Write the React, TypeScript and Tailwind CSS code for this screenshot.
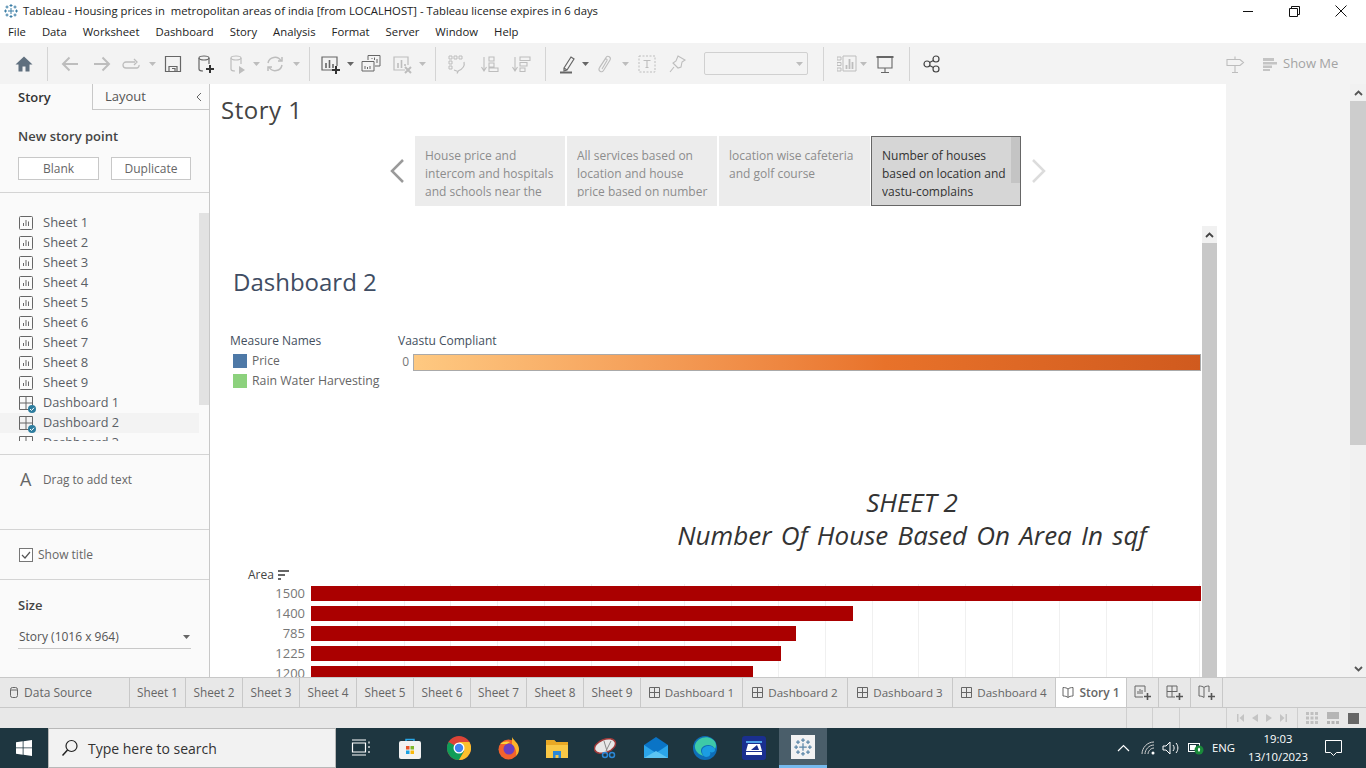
import React from "react";

const menus = ["File", "Data", "Worksheet", "Dashboard", "Story", "Analysis", "Format", "Server", "Window", "Help"];
const sheets = ["Sheet 1", "Sheet 2", "Sheet 3", "Sheet 4", "Sheet 5", "Sheet 6", "Sheet 7", "Sheet 8", "Sheet 9"];

const storyCards = [
    { text: "House price and intercom and hospitals and schools near the houses", width: "w-[150px]" },
    { text: "All services based on location and house price based on number of rooms", width: "w-[150px]" },
    { text: "location wise cafeteria and golf course", width: "w-[151px]" },
];

const sheetTabs = [
    { label: "Sheet 1", width: "w-[56px]" },
    { label: "Sheet 2", width: "w-[57px]" },
    { label: "Sheet 3", width: "w-[57px]" },
    { label: "Sheet 4", width: "w-[57px]" },
    { label: "Sheet 5", width: "w-[57px]" },
    { label: "Sheet 6", width: "w-[57px]" },
    { label: "Sheet 7", width: "w-[56px]" },
    { label: "Sheet 8", width: "w-[57px]" },
    { label: "Sheet 9", width: "w-[57px]" },
];

const dashTabs = [
    { label: "Dashboard 1", width: "w-[102px]" },
    { label: "Dashboard 2", width: "w-[105px]" },
    { label: "Dashboard 3", width: "w-[105px]" },
    { label: "Dashboard 4", width: "w-[103px]" },
];

const bars = [
    { label: "1500", width: "w-[890px]" },
    { label: "1400", width: "w-[542px]" },
    { label: "785", width: "w-[485px]" },
    { label: "1225", width: "w-[470px]" },
    { label: "1200", width: "w-[442px]" },
];

function Tableau({ size, light }: { size: number; light?: boolean }) {
    const c = light ? "#5b87a8" : "#3d7fa6";
    const cross = (x: number, y: number, r: number, k: string) => (
        <path key={k} d={`M${x - r} ${y}h${r * 2}M${x} ${y - r}v${r * 2}`} stroke={c} strokeWidth="1" fill="none" />
    );
    return (
        <svg width={size} height={size} viewBox="0 0 16 16" className="shrink-0">
            {cross(8, 8, 3, "c")}
            {cross(8, 2.5, 1.5, "t")}
            {cross(8, 13.5, 1.5, "b")}
            {cross(2.5, 8, 1.5, "l")}
            {cross(13.5, 8, 1.5, "r")}
            {cross(4, 4, 1.5, "a")}
            {cross(12, 4, 1.5, "d")}
            {cross(4, 12, 1.5, "e")}
            {cross(12, 12, 1.5, "f")}
        </svg>
    );
}

function Caret({ className, dark }: { className: string; dark?: boolean }) {
    return (
        <svg width="7" height="4" viewBox="0 0 7 4" className={`shrink-0 ${className}`}>
            <path d="M0 0h7L3.5 4z" fill={dark ? "#666" : "#bdbdbd"} />
        </svg>
    );
}

function Sep({ className }: { className: string }) {
    return <div className={`w-px h-[34px] bg-[#d4d4d4] shrink-0 ${className}`} />;
}

function Ico({ className, children }: { className: string; children: React.ReactNode }) {
    return (
        <svg width="20" height="20" viewBox="0 0 20 20" fill="none" className={`shrink-0 ${className}`}>
            {children}
        </svg>
    );
}

function Toolbar() {
    const off = "#bdbdbd";
    const on = "#666";
    return (
        <div className="h-[41px] bg-[#f3f3f3] flex items-center shrink-0">
            <Ico className="ml-[14px]"><path d="M10 2.5 1.5 10.5H4.5V17.5H8.5V12.5H11.5V17.5H15.5V10.5H18.5z" fill="#5f6f7e" /></Ico>
            <Sep className="ml-[13px]" />
            <Ico className="ml-[12px]"><path d="M18 10H3M9.5 3.5 3 10l6.5 6.5" stroke={off} strokeWidth="2" /></Ico>
            <Ico className="ml-[12px]"><path d="M2 10h15M10.5 3.5 17 10l-6.5 6.5" stroke={off} strokeWidth="2" /></Ico>
            <Ico className="ml-[9px]"><path d="M14 8H5a2.5 2.5 0 0 0 0 6h11a2.5 2.5 0 0 0 2-3M13 5l3 3-3 3" stroke={off} strokeWidth="1.3" /></Ico>
            <Caret className="ml-[8px]" />
            <Ico className="ml-[7px]"><path d="M2.5 2.5h15v15h-15zM6 17.5v-5h8v5M9 14.5h3v3" stroke={on} strokeWidth="1.2" /></Ico>
            <Ico className="ml-[12px]">
                <ellipse cx="9" cy="4" rx="5" ry="2" stroke={on} strokeWidth="1.2" />
                <path d="M4 4v11c0 1.3 2 2 4 2M14 4v6" stroke={on} strokeWidth="1.2" />
                <path d="M15 11v8M11 15h8" stroke="#333" strokeWidth="2" />
            </Ico>
            <Ico className="ml-[12px]">
                <ellipse cx="9" cy="4" rx="5" ry="2" stroke={off} strokeWidth="1.2" />
                <path d="M4 4v11c0 1.3 2 2 4 2M14 4v6" stroke={off} strokeWidth="1.2" />
                <path d="M12 12l6 4-6 4z" fill={off} />
            </Ico>
            <Caret className="ml-[6px]" />
            <Ico className="ml-[5px]"><path d="M3 9a7 7 0 0 1 13-2M17 11a7 7 0 0 1-13 2M13 7h4V3M7 13H3v4" stroke={off} strokeWidth="1.5" /></Ico>
            <Caret className="ml-[8px]" />
            <Sep className="ml-[9px]" />
            <Ico className="ml-[10px]">
                <path d="M14 16H2V3h15v9" stroke={on} strokeWidth="1.2" />
                <path d="M6 9v5M9.5 6v8M13 10v4" stroke={on} strokeWidth="1.6" />
                <path d="M16 12v8M12 16h8" stroke="#333" strokeWidth="2" />
            </Ico>
            <Caret className="ml-[7px]" dark />
            <Ico className="ml-[7px]">
                <path d="M7 6V1.500h12V12h-5M1 7.500h12V17H1z" stroke={on} strokeWidth="1" />
                <path d="M11 5V4M13.500 6V3.500M16 9V5M4 15v-3M6.500 15v-2M9 15v-3" stroke={on} strokeWidth="1" />
            </Ico>
            <Ico className="ml-[11px]">
                <path d="M13 16H2V3h14v8" stroke={off} strokeWidth="1.2" />
                <path d="M6 9v5M9.5 6v8M13 10v2" stroke={off} strokeWidth="1.6" />
                <path d="M13 13l6 6M19 13l-6 6" stroke={off} strokeWidth="2" />
            </Ico>
            <Caret className="ml-[7px]" />
            <Sep className="ml-[9px]" />
            <Ico className="ml-[11px]">
                <path d="M2 2h3v3H2zM7 2h3v3H7zM12 2h3v3h-3zM2 7h3v3H2zM2 12h3v3H2z" stroke={off} />
                <path d="M17 8c1 4-1 7-6 9M7 16l4 1.500-1 2" stroke={off} strokeWidth="1.2" />
            </Ico>
            <Ico className="ml-[13px]"><path d="M4 3v14M1.500 13 4 17l2.500-4M9 3h5v4H9zM9 9h5v4H9zM9 14h9v3.500H9z" stroke={off} strokeWidth="1.1" /></Ico>
            <Ico className="ml-[11px]"><path d="M4 3v14M1.500 13 4 17l2.500-4M9 3h10v3.500H9zM9 8.500h7v3.500H9zM9 14h5v3.500H9z" stroke={off} strokeWidth="1.1" /></Ico>
            <Sep className="ml-[14px]" />
            <Ico className="ml-[12px]">
                <path d="M6 14 13 3l3 2-7 11-3 1zM6 14l3 2" stroke={on} strokeWidth="1.2" />
                <path d="M2 18.500h12" stroke={on} strokeWidth="2" />
            </Ico>
            <Caret className="ml-[4px]" dark />
            <Ico className="ml-[5px]"><path d="M5.500 13.500 12 3.500c1.800-2.500 5.500-.5 4 2.500l-6.500 10.500c-1.500 2.500-5.500.8-4.300-2.300L11 5.500c.8-1.200 2.500-.3 2 1L8 15" stroke={off} strokeWidth="1.1" /></Ico>
            <Caret className="ml-[8px]" />
            <Ico className="ml-[8px]">
                <path d="M2 2h16v16H2z" stroke={off} strokeDasharray="2 1.500" />
                <path d="M6.500 6.500h7M10 6.500v7M8.500 13.500h3" stroke={off} strokeWidth="1.1" />
            </Ico>
            <Ico className="ml-[10px]"><path d="M11 2l7 4-3 2-1 5-3 1-5-5 3-2zM7 13l-4 5" stroke={off} strokeWidth="1.1" /></Ico>
            <div className="ml-[17px] w-[104px] h-[23px] shrink-0 border border-[#d0d0d0] rounded-[2px] flex items-center justify-end pr-[3px]">
                <Caret className="mr-[1px]" />
            </div>
            <Sep className="ml-[15px]" />
            <Ico className="ml-[13px]">
                <path d="M0 3h4v3H0zM0 8.500h4v3H0zM0 14h4v3H0zM6 2h13v15H6z" stroke={off} />
                <path d="M9.500 15v-4M12.500 15V5M15.500 15V8" stroke={off} strokeWidth="1.800" />
            </Ico>
            <Caret className="ml-[3px]" />
            <Ico className="ml-[8px]">
                <path d="M1.500 3h17" stroke={on} strokeWidth="2" />
                <path d="M3 3v11h14V3M10 14v4M6 18.500h8" stroke={on} strokeWidth="1.100" />
            </Ico>
            <Sep className="ml-[14px]" />
            <Ico className="ml-[12px]">
                <circle cx="5" cy="10" r="3" stroke="#444" strokeWidth="1.200" />
                <circle cx="14" cy="5" r="3" stroke="#444" strokeWidth="1.200" />
                <circle cx="14" cy="15" r="3" stroke="#444" strokeWidth="1.200" />
                <path d="M7.500 8.500 11.500 6.500M7.500 11.500l4 2" stroke="#444" strokeWidth="1.200" />
            </Ico>
            <Ico className="ml-auto">
                <path d="M2 5.500h13l3.500 3-3.500 3H2zM10 2.500v3M10 11.500v7M7 18.500h6" stroke={off} strokeWidth="1.100" />
            </Ico>
            <Ico className="ml-[15px]"><path d="M3 4h11v3H3zM3 8h14v2.500H3zM3 11.500h9v2.500H3zM3 15h7v2H3z" fill="#c4c4c4" /></Ico>
            <span className="ml-[3px] mr-[29px] w-[54px] whitespace-nowrap text-[13px] text-[#a3a3a3]">Show Me</span>
        </div>
    );
}

function SheetIcon() {
    return (
        <svg width="14" height="14" viewBox="0 0 14 14" fill="none" className="shrink-0">
            <rect x="0.500" y="0.500" width="13" height="13" rx="1" stroke="#666" />
            <path d="M4.500 10V7M7 10V4M9.500 10V5.500" stroke="#666" />
        </svg>
    );
}

function DashIcon({ badge }: { badge?: boolean }) {
    return (
        <span className="relative shrink-0 w-[14px] h-[14px]">
            <svg width="14" height="14" viewBox="0 0 14 14" fill="none">
                <path d="M.5.5h13v13H.5zM.5 7h13M7 .5v13" stroke="#666" />
            </svg>
            {badge && (
                <svg width="8" height="8" viewBox="0 0 8 8" className="absolute -right-[3px] -bottom-[3px]">
                    <circle cx="4" cy="4" r="4" fill="#2e7d9e" />
                    <path d="M2 4l1.500 1.500L6 2.800" stroke="#fff" fill="none" />
                </svg>
            )}
        </span>
    );
}

function Sidebar() {
    return (
        <aside className="w-[210px] shrink-0 bg-[#fafafa] border-r border-[#c8c8c8] flex flex-col overflow-hidden">
            <div className="flex h-[26px] shrink-0">
                <div className="w-[92px] pl-[18px] pt-[1px] flex items-center text-[13px] font-semibold text-[#333]">Story</div>
                <div className="flex-1 pl-[12px] pr-[7px] pt-[1px] flex items-center justify-between border-l border-b border-[#c8c8c8] text-[13px] text-[#555]">
                    Layout
                    <svg width="7" height="10" viewBox="0 0 7 10" fill="none"><path d="M6 1 2 5l4 4" stroke="#666" /></svg>
                </div>
            </div>
            <div className="h-[83px] shrink-0 border-b border-[#d4d4d4] px-[18px] pt-[17px]">
                <div className="text-[13px] font-semibold text-[#444] leading-[18px]">New story point</div>
                <div className="flex gap-[12px] mt-[12px]">
                    <div className="w-[81px] h-[23px] border border-[#c8c8c8] bg-white flex items-center justify-center text-[12px] text-[#666]">Blank</div>
                    <div className="w-[80px] h-[23px] border border-[#c8c8c8] bg-white flex items-center justify-center text-[12px] text-[#666]">Duplicate</div>
                </div>
            </div>
            <div className="h-[262px] shrink-0 border-b border-[#d4d4d4] pt-[20px]">
                <div className="h-[228px] overflow-hidden flex">
                    <div className="w-[199px] shrink-0">
                        {sheets.map((s) => (
                            <div key={s} className="h-5 pl-[19px] flex items-center gap-[10px] text-[13px] text-[#5a5f66]">
                                <SheetIcon />
                                {s}
                            </div>
                        ))}
                        <div className="h-5 pl-[19px] flex items-center gap-[10px] text-[12.700px] text-[#5a5f66]">
                            <DashIcon badge />
                            Dashboard 1
                        </div>
                        <div className="h-5 pl-[19px] flex items-center gap-[10px] text-[12.700px] text-[#5a5f66] bg-[#f3f3f3]">
                            <DashIcon badge />
                            Dashboard 2
                        </div>
                        <div className="h-5 pl-[19px] flex items-center gap-[10px] text-[12.700px] text-[#5a5f66]">
                            <DashIcon badge />
                            Dashboard 3
                        </div>
                    </div>
                    <div className="w-[10px] h-[192px] bg-[#e2e2e2]" />
                </div>
            </div>
            <div className="h-[75px] shrink-0 border-b border-[#d4d4d4] pl-[20px] pt-[14px] flex items-start">
                <span className="text-[18px] leading-[21px] text-[#666] w-[23px]">A</span>
                <span className="text-[11.800px] leading-[21px] text-[#666]">Drag to add text</span>
            </div>
            <div className="h-[50px] shrink-0 border-b border-[#d4d4d4] pl-[19px] flex items-center gap-[5px]">
                <svg width="14" height="14" viewBox="0 0 14 14" fill="none" className="shrink-0">
                    <rect x=".5" y=".5" width="13" height="13" stroke="#777" fill="#fff" />
                    <path d="M3 7l3 3 5-6" stroke="#555" strokeWidth="1.200" />
                </svg>
                <span className="text-[12px] text-[#666]">Show title</span>
            </div>
            <div className="px-[18px] pt-[16px]">
                <div className="text-[13px] font-semibold text-[#444] leading-[18px]">Size</div>
                <div className="mt-[11px] h-[24px] w-[173px] border-b border-[#c8c8c8] flex items-center justify-between pl-px pr-[1px] text-[12px] text-[#555]">
                    Story (1016 x 964)
                    <Caret className="" dark />
                </div>
            </div>
        </aside>
    );
}

function StoryNav() {
    return (
        <div className="flex mt-[26px] h-[70px] shrink-0">
            <div className="ml-[176px] w-[29px] flex items-center">
                <svg width="18" height="26" viewBox="0 0 18 26" fill="none" className="ml-[3px]"><path d="M14 2 3 13l11 11" stroke="#9a9a9a" strokeWidth="2.500" /></svg>
            </div>
            <div className="flex gap-[2px]">
                {storyCards.map((c) => (
                    <div key={c.text} className={`${c.width} h-[70px] bg-[#ececec] overflow-hidden pl-[10px] pr-[8px] pt-[11px] pb-[9px] text-[12px] leading-[18px] text-[#8c8c8c]`}>
                        <div className="h-[50px] overflow-hidden">{c.text}</div>
                    </div>
                ))}
                <div className="relative -ml-px w-[150px] h-[70px] bg-[#d6d6d6] border border-[#666] overflow-hidden pl-[10px] pr-[10px] pt-[10px] text-[12px] leading-[18px] text-[#333]">
                    <div className="h-[50px] overflow-hidden">Number of houses based on location and vastu-complains</div>
                    <div className="absolute right-0 top-0 w-[9px] h-[46px] bg-[#c4c4c4]" />
                </div>
            </div>
            <div className="ml-[8px] flex items-center">
                <svg width="18" height="26" viewBox="0 0 18 26" fill="none"><path d="M4 2l11 11L4 24" stroke="#dcdcdc" strokeWidth="2.500" /></svg>
            </div>
        </div>
    );
}

function DashView() {
    return (
        <div className="mt-[20px] ml-[12px] flex h-[451px] overflow-hidden">
            <div className="w-[980px] shrink-0 overflow-hidden">
                <div className="pt-[40px] pl-[11px] text-[24px] leading-[32px] text-[#3f4d63]">Dashboard 2</div>
                <div className="mt-[34px] pl-[8px] flex">
                    <div className="w-[168px] shrink-0">
                        <div className="h-[18px] text-[12px] leading-[18px] font-medium text-[#444f5e]">Measure Names</div>
                        <div className="mt-[1px] h-5 flex items-center pl-[3px] gap-[5px] text-[12px] text-[#666]">
                            <span className="w-[14px] h-[14px] bg-[#4e79a7]" />
                            Price
                        </div>
                        <div className="h-5 flex items-center pl-[3px] gap-[5px] text-[12.300px] text-[#666] whitespace-nowrap">
                            <span className="w-[14px] h-[14px] bg-[#8cd17d]" />
                            Rain Water Harvesting
                        </div>
                    </div>
                    <div className="flex-1">
                        <div className="h-[18px] text-[12px] leading-[18px] font-medium text-[#444f5e]">Vaastu Compliant</div>
                        <div className="mt-[3px] flex items-center pr-px">
                            <span className="w-[11px] text-right text-[12px] text-[#777]">0</span>
                            <div className="ml-[4px] flex-1 h-[17px] border border-[#aaa] bg-gradient-to-r from-[#fec981] via-[#e8722a] via-60% to-[#d05a1e]" />
                        </div>
                    </div>
                </div>
                <div className="mt-[95px] ml-[455px] w-[470px] text-center italic text-[26px] leading-[33px] text-[#333] whitespace-nowrap">
                    <div>SHEET 2</div>
                    <div className="[word-spacing:2.500px]">Number Of House Based On Area In sqf</div>
                </div>
                <div className="mt-[15px] ml-[26px] h-[16px] flex items-center gap-[4px] text-[12px] font-medium text-[#444]">
                    Area
                    <svg width="11" height="10" viewBox="0 0 11 10" fill="#666"><path d="M0 0h11v2H0zM0 4h7v2H0zM0 8h3v2H0z" /></svg>
                </div>
                <div className="mt-[1px] flex">
                    <div className="w-[83px] shrink-0">
                        {bars.map((b) => (
                            <div key={b.label} className="h-5 text-right text-[13px] leading-[18px] text-[#777]">{b.label}</div>
                        ))}
                    </div>
                    <div className="ml-[6px] flex-1 bg-[repeating-linear-gradient(90deg,transparent_0,transparent_45.8px,#f0f0f0_45.8px,#f0f0f0_46.8px)]">
                        {bars.map((b) => (
                            <div key={b.label} className="h-5 pt-[2px]">
                                <div className={`${b.width} h-[15px] bg-[#aa0000]`} />
                            </div>
                        ))}
                    </div>
                </div>
            </div>
            <div className="w-[15px] shrink-0 flex flex-col">
                <div className="h-[17px] bg-[#f1f1f1] flex items-center justify-center">
                    <svg width="9" height="6" viewBox="0 0 9 6" fill="none"><path d="M1 5l3.500-3.500L8 5" stroke="#444" strokeWidth="1.800" /></svg>
                </div>
                <div className="flex-1 bg-[#c8c8c8]" />
            </div>
        </div>
    );
}

function Tabs() {
    const tab = "h-full shrink-0 flex items-center justify-center border-r border-[#c8c8c8] text-[#666]";
    const add = "w-[32px] h-full shrink-0 flex items-center justify-center border-r border-[#c8c8c8]";
    const plus = <path d="M13.500 8v7M10 11.500h7" stroke="#555" strokeWidth="1.600" />;
    return (
        <div className="h-[31px] shrink-0 flex bg-[#e8e8e8] border-t border-b border-[#c8c8c8]">
            <div className={`${tab} text-[12px] w-[130px] gap-[6px] justify-start pl-[10px]`}>
                <svg width="8" height="11" viewBox="0 0 8 11" fill="none">
                    <rect x=".5" y=".5" width="7" height="10" rx="2" stroke="#666" />
                    <path d="M.5 3h7" stroke="#666" />
                </svg>
                Data Source
            </div>
            {sheetTabs.map((t) => (
                <div key={t.label} className={`${tab} text-[11.800px] ${t.width}`}>{t.label}</div>
            ))}
            {dashTabs.map((t) => (
                <div key={t.label} className={`${tab} text-[11.600px] ${t.width} gap-[5px]`}>
                    <svg width="11" height="11" viewBox="0 0 11 11" fill="none"><path d="M.5.5h10v10H.5zM.5 5.500h10M5.500.5v10" stroke="#666" /></svg>
                    {t.label}
                </div>
            ))}
            <div className={`${tab} text-[12px] w-[71px] gap-[5px] bg-white font-semibold`}>
                <svg width="12" height="11" viewBox="0 0 12 11" fill="none"><path d="M6 2C5 1 3 .5 1 .5v8.500c2 0 4 .5 5 1.500 1-1 3-1.500 5-1.500V.5C9 .5 7 1 6 2zM6 2v8.500" stroke="#666" /></svg>
                Story 1
            </div>
            <div className={add}>
                <svg width="18" height="16" viewBox="0 0 18 16" fill="none"><path d="M9 12H1V1h10v6M4 9V6M6 9V4M8 9V5" stroke="#666" />{plus}</svg>
            </div>
            <div className={add}>
                <svg width="18" height="16" viewBox="0 0 18 16" fill="none"><path d="M9 12H1V1h10v6M1 6.500h10M6 1v11" stroke="#666" />{plus}</svg>
            </div>
            <div className={add}>
                <svg width="18" height="16" viewBox="0 0 18 16" fill="none"><path d="M6 2.500C5 1.500 3 1 1 1v10c2 0 4 .5 5 1.500M6 2.500C7 1.500 9 1 11 1v6M6 2.500v10" stroke="#666" />{plus}</svg>
            </div>
        </div>
    );
}

function StatusBar() {
    return (
        <div className="h-[20px] shrink-0 flex bg-[#e8e8e8]">
            <div className="w-[1127px] shrink-0 border-r border-[#cfcfcf]" />
            <div className="w-[26px] shrink-0 border-r border-[#cfcfcf]" />
            <div className="w-[27px] shrink-0 border-r border-[#cfcfcf]" />
            <div className="w-[47px] shrink-0 border-r border-[#cfcfcf]" />
            <div className="w-[71px] shrink-0 border-r border-[#cfcfcf] flex items-center justify-center gap-[8px]">
                <svg width="7" height="8" viewBox="0 0 7 8" fill="#c4c4c4"><path d="M0 0h1.500v8H0zM7 0v8L2.500 4z" /></svg>
                <svg width="6" height="8" viewBox="0 0 6 8" fill="#c4c4c4"><path d="M6 0v8L0 4z" /></svg>
                <svg width="6" height="8" viewBox="0 0 6 8" fill="#c4c4c4"><path d="M0 0v8l6-4z" /></svg>
                <svg width="7" height="8" viewBox="0 0 7 8" fill="#c4c4c4"><path d="M5.500 0H7v8H5.500zM0 0v8l4.500-4z" /></svg>
            </div>
            <div className="flex items-center pl-[8px] gap-[9px]">
                <svg width="12" height="12" viewBox="0 0 12 12" fill="#c0c0c0"><path d="M0 0h3v3H0zM4.500 0h3v3h-3zM9 0h3v3H9zM0 4.500h3v3H0zM4.500 4.500h3v3h-3zM9 4.500h3v3H9zM0 9h3v3H0zM4.500 9h3v3h-3zM9 9h3v3H9z" /></svg>
                <svg width="12" height="12" viewBox="0 0 12 12" fill="#b5b5b5"><path d="M0 0h12v7H0zM0 9h3v3H0zM4.500 9h3v3h-3zM9 9h3v3H9z" /></svg>
                <div className="w-[11px] h-[11px] bg-[#666]" />
            </div>
        </div>
    );
}

function TaskIcon({ className, children }: { className: string; children: React.ReactNode }) {
    return (
        <svg width="24" height="24" viewBox="0 0 24 24" fill="none" className={`shrink-0 ${className}`}>
            {children}
        </svg>
    );
}

function Taskbar() {
    return (
        <div className="h-[40px] shrink-0 bg-[#1e3640] flex items-center text-white">
            <div className="w-[48px] shrink-0 flex justify-center">
                <svg width="16" height="16" viewBox="0 0 16 16" fill="#fff"><path d="M0 2.300 6.700 1.300V7.500H0zM7.500 1.200 16 0V7.500H7.500zM0 8.300H6.700V14.700L0 13.700zM7.500 8.300H16V16L7.500 14.800z" /></svg>
            </div>
            <div className="w-[288px] h-full shrink-0 bg-[#f2f2f2] border border-[#b8b8b8] flex items-center pl-[12px] text-[#333]">
                <svg width="18" height="18" viewBox="0 0 18 18" fill="none"><circle cx="10.500" cy="7" r="5.500" stroke="#222" strokeWidth="1.200" /><path d="M6.500 11 1.500 16.500" stroke="#222" strokeWidth="1.500" /></svg>
                <span className="ml-[9px] text-[14px]">Type here to search</span>
            </div>
            <TaskIcon className="ml-[13px]"><path d="M3.500 7h13v9h-13zM3 4h14M3 19h14M20 5.500v2M20 10v2M20 15v2" stroke="#fff" strokeWidth="1.200" /></TaskIcon>
            <TaskIcon className="ml-[25px]">
                <path d="M8 6V3.500h8V6" stroke="#29a8e8" strokeWidth="1.500" />
                <rect x="1" y="5" width="22" height="18" rx="2" fill="#f2f2f2" />
                <path d="M8 10h3.500v3.500H8z" fill="#e8542a" /><path d="M12.500 10H16v3.500h-3.500z" fill="#7eb72b" />
                <path d="M8 14.500h3.500V18H8z" fill="#1ba1e2" /><path d="M12.500 14.500H16V18h-3.500z" fill="#f9b90c" />
            </TaskIcon>
            <TaskIcon className="ml-[25px]">
                <circle cx="12" cy="12" r="12" fill="#dc4437" />
                <path d="M12 12 1.600 6A12 12 0 0 0 12 24l5.200-9z" fill="#0f9d58" />
                <path d="M12 6h10.400A12 12 0 0 1 12 24l5.200-9z" fill="#fbc02d" />
                <circle cx="12" cy="12" r="5.500" fill="#fff" /><circle cx="12" cy="12" r="4.200" fill="#3e82f1" />
            </TaskIcon>
            <TaskIcon className="ml-[26px]">
                <circle cx="11.500" cy="13.500" r="10" fill="#f2622c" />
                <path d="M15 1c1 3 7 6 7 12 0 3-1 5-3 7 1-5-1-9-4-11z" fill="#fdb42b" />
                <path d="M3 8c3-3 8-3 10-2-1 1-2 1-3 2z" fill="#fbd23b" />
                <circle cx="12" cy="13" r="5.500" fill="#6b3fc1" />
            </TaskIcon>
            <TaskIcon className="ml-[24px]">
                <path d="M1 4h8l2 2h12v16H1z" fill="#f9c846" />
                <path d="M1 4h8l2 2h12v3H1z" fill="#e9a825" />
                <path d="M8 15h8v7h-2.500v-3h-3v3H8z" fill="#2b88d8" />
            </TaskIcon>
            <TaskIcon className="ml-[25px]">
                <ellipse cx="11" cy="10" rx="11" ry="6.500" fill="#e8e8e8" stroke="#a13a3a" strokeWidth="1.500" transform="rotate(-22 11 10)" />
                <path d="M10 5l3 10M17 5l-5 10" stroke="#888" />
                <circle cx="11" cy="19" r="2.500" stroke="#2b88d8" strokeWidth="1.500" />
                <circle cx="18" cy="19" r="2.500" stroke="#2b88d8" strokeWidth="1.500" />
            </TaskIcon>
            <TaskIcon className="ml-[26px]">
                <path d="M0 9 12 1l12 8v13H0z" fill="#0a74c6" />
                <path d="M0 9l12 8 12-8v13H0z" fill="#2ba5ea" />
                <path d="M0 22l12-7 12 7z" fill="#5cc4f2" />
            </TaskIcon>
            <TaskIcon className="ml-[25px]">
                <circle cx="12" cy="12" r="12" fill="#0e6eb8" />
                <path d="M2 9c2-7 11-10 17-6 4 2 5 7 3 10-2-4-7-5-11-3-4 2-4 7 0 10C6 19 1 15 2 9z" fill="#3ec9a7" />
                <path d="M9 15c0-3 3-5 7-5 3 0 6 2 6 4 0 2-3 3-5 2 1 2 0 5-4 5-2 0-4-3-4-6z" fill="#1b9de2" />
            </TaskIcon>
            <TaskIcon className="ml-[25px]">
                <rect width="24" height="24" rx="3" fill="#1a2f8f" />
                <path d="M4 5h16v2H4z" fill="#4fa3e8" />
                <path d="M6 8h12l2 7H4z" fill="#fff" />
                <path d="M9 14l6-5 2 5z" fill="#1a2f8f" />
                <path d="M4 16h16v3H4z" fill="#fff" />
            </TaskIcon>
            <div className="ml-[13px] w-[48px] h-full shrink-0 bg-[#4a5e6a] border-b-[3px] border-[#76b9ed] flex items-center justify-center">
                <div className="w-[24px] h-[24px] bg-[#f2f2f2] flex items-center justify-center">
                    <Tableau size={20} light />
                </div>
            </div>
            <svg width="13" height="8" viewBox="0 0 13 8" fill="none" className="ml-auto shrink-0"><path d="M1 7l5.500-5.500L12 7" stroke="#fff" strokeWidth="1.200" /></svg>
            <svg width="14" height="14" viewBox="0 0 14 14" fill="none" className="ml-[11px] shrink-0"><path d="M1 13C1 7 6 1 13 1M4 13C4 8.500 8 4 13 4M7 13c0-3 3-6 6-6" stroke="#d0d0d0" /><circle cx="12" cy="12" r="1.500" fill="#fff" /></svg>
            <svg width="18" height="14" viewBox="0 0 18 14" fill="none" className="ml-[7px] shrink-0"><path d="M1 5h3l4-4v12l-4-4H1zM11 4c1.500 2 1.500 4 0 6M14 2c2.500 3 2.500 7 0 10" stroke="#fff" /></svg>
            <svg width="16" height="14" viewBox="0 0 16 14" className="ml-[8px] shrink-0">
                <rect x=".5" y="2.500" width="11" height="8" fill="none" stroke="#fff" />
                <rect x="2" y="4" width="6" height="5" fill="#fff" />
                <circle cx="11" cy="9" r="4.500" fill="#1a8a3a" />
                <path d="M11 6.500c1.500 1 1.500 3 0 4.500-1.500-1.500-1.500-3.500 0-4.500z" fill="#fff" />
            </svg>
            <span className="ml-[8px] w-[30px] shrink-0 text-[11.300px]">ENG</span>
            <div className="ml-[4px] w-[64px] shrink-0 text-center text-[11.300px] leading-[18px]">
                <div>19:03</div>
                <div>13/10/2023</div>
            </div>
            <svg width="17" height="16" viewBox="0 0 17 16" fill="none" className="ml-[15px] mr-[24px] shrink-0"><path d="M.5.5h16v12h-5l-3 3-3-3h-5z" stroke="#fff" /></svg>
        </div>
    );
}

export default function App() {
    return (
        <div className="w-full h-[768px] overflow-hidden flex flex-col bg-white font-['Open_Sans',sans-serif]">
            <div className="h-[22px] shrink-0 flex items-center pl-[3px] bg-white text-[11.300px] text-[#222]">
                <Tableau size={16} />
                <span className="ml-[4px] whitespace-pre">Tableau - Housing prices in  metropolitan areas of india [from LOCALHOST] - Tableau license expires in 6 days</span>
                <svg width="11" height="11" viewBox="0 0 11 11" fill="none" className="ml-auto"><path d="M0 5.500h10" stroke="#111" /></svg>
                <svg width="11" height="11" viewBox="0 0 11 11" fill="none" className="ml-[35px]"><path d="M.5 2.500h8v8h-8zM2.500 2.500V.5h8v8h-2" stroke="#111" /></svg>
                <svg width="12" height="12" viewBox="0 0 12 12" fill="none" className="ml-[35px] mr-[19px]"><path d="M.5.5l11 11M11.500.5l-11 11" stroke="#111" /></svg>
            </div>
            <div className="h-[21px] shrink-0 flex items-center pl-[8px] gap-[16px] text-[11.300px] text-[#222] bg-white">
                {menus.map((m) => (
                    <span key={m}>{m}</span>
                ))}
            </div>
            <Toolbar />
            <div className="flex-1 flex min-h-0">
                <Sidebar />
                <main className="w-[1016px] shrink-0 bg-white flex flex-col overflow-hidden">
                    <div className="h-[26px] pl-[11px] pt-[10px] shrink-0 text-[24px] leading-[31px] tracking-[0.5px] text-[#444]">Story 1</div>
                    <StoryNav />
                    <DashView />
                </main>
                <div className="flex-1 bg-[#f3f3f3]" />
                <div className="w-[16px] shrink-0 bg-[#f1f1f1] flex flex-col">
                    <div className="h-[17px] flex items-center justify-center">
                        <svg width="9" height="6" viewBox="0 0 9 6" fill="none"><path d="M1 5l3.500-3.500L8 5" stroke="#555" strokeWidth="1.800" /></svg>
                    </div>
                    <div className="h-[344px] bg-[#cdcdcd]" />
                    <div className="flex-1" />
                    <div className="h-[17px] flex items-center justify-center">
                        <svg width="9" height="6" viewBox="0 0 9 6" fill="none"><path d="M1 1l3.500 3.500L8 1" stroke="#555" strokeWidth="1.800" /></svg>
                    </div>
                </div>
            </div>
            <Tabs />
            <StatusBar />
            <Taskbar />
        </div>
    );
}
